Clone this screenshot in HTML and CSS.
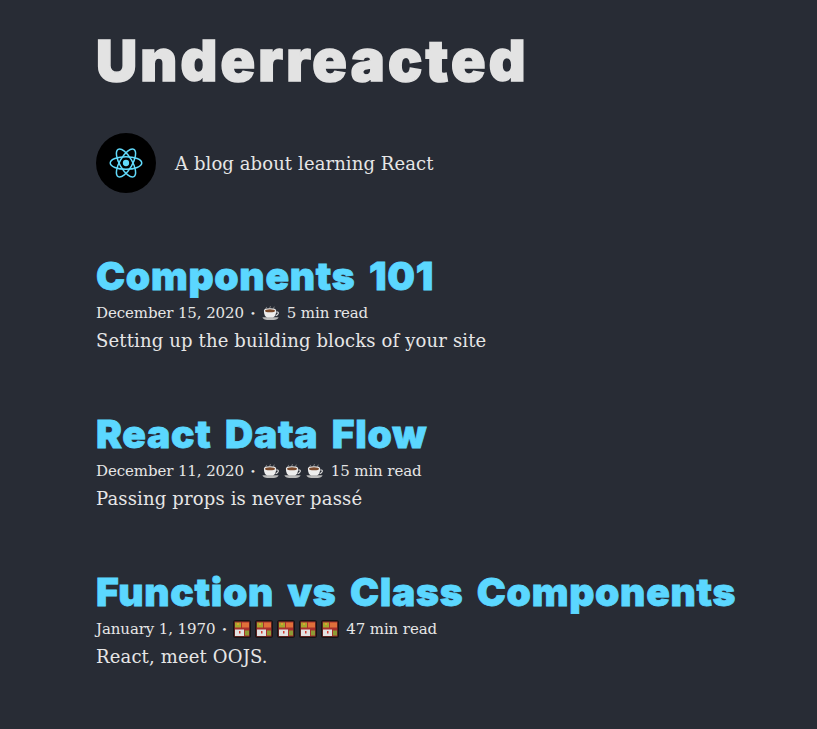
FILE: index.html
```html
<!DOCTYPE html>
<html lang="en">
<head>
    <meta charset="UTF-8">
    <meta name="viewport" content="width=device-width, initial-scale=1.0">
    <title>Underreacted</title>
    <link rel="stylesheet" href="styles.css">
</head>
<body>
    <svg class="defs" width="0" height="0">
        <symbol id="cup" viewBox="0 0 18 16">
            <path d="M4 3.500C4 2.500 5 2.600 5 1.600M8 3C8 2 9 1.800 9 .8M12 3.500c0-1 1-1.200 1-2.200" fill="none" stroke="#8a8a8a" stroke-width="1"/>
            <path d="M.5 12.400h17c-.5 2-3 3.100-8.500 3.100S1 14.400.5 12.400z" fill="#b9b9b9"/>
            <path d="M15 7h1.500c1.200 0 1.200 3.300-2 3.800" fill="none" stroke="#e0e0e0" stroke-width="1.200"/>
            <path d="M2 5.500c0-1.500 2.500-2.400 6.500-2.400S15 4 15 5.500c0 4-1.500 6.700-3.500 7.200h-6C3.500 12.200 2 9.500 2 5.500z" fill="#ededed"/>
            <ellipse cx="8.500" cy="5.600" rx="5.300" ry="1.700" fill="#7b4a2c"/>
        </symbol>
        <symbol id="bento" viewBox="0 0 18 18">
            <rect width="18" height="18" rx="2.500" fill="#141414"/>
            <rect x="1.500" y="1.500" width="15" height="15" fill="#a8302c"/>
            <rect x="2" y="2.500" width="6" height="5" fill="#a5a82e"/>
            <rect x="4" y="3" width="2" height="2" fill="#e0a030"/>
            <rect x="9" y="2.500" width="7" height="5" fill="#e0703a"/>
            <rect x="2" y="9.500" width="9" height="6.500" fill="#e2e2e2"/>
            <rect x="6" y="11" width="1.500" height="2.500" fill="#d23b30"/>
            <rect x="12" y="10.500" width="4" height="5" fill="#8f9a34"/>
        </symbol>
    </svg>

    <main class="page">
        <h1 class="site-title">Underreacted</h1>

        <div class="bio">
            <div class="avatar">
                <svg viewBox="-12 -12 24 24" width="36" height="36">
                    <circle r="2.100" fill="#61dafb"/>
                    <g fill="none" stroke="#61dafb" stroke-width="1">
                        <ellipse rx="10.500" ry="4.200"/>
                        <ellipse rx="10.500" ry="4.200" transform="rotate(60)"/>
                        <ellipse rx="10.500" ry="4.200" transform="rotate(120)"/>
                    </g>
                </svg>
            </div>
            <p class="tagline">A blog about learning React</p>
        </div>

        <article class="post">
            <h2 class="post-title">Components 101</h2>
            <div class="meta">
                <span>December 15, 2020</span><span class="dot">•</span>
                <span class="icons"><svg class="ico"><use href="#cup"/></svg></span>
                <span>5 min read</span>
            </div>
            <p class="desc">Setting up the building blocks of your site</p>
        </article>

        <article class="post">
            <h2 class="post-title">React Data Flow</h2>
            <div class="meta">
                <span>December 11, 2020</span><span class="dot">•</span>
                <span class="icons">
                    <svg class="ico"><use href="#cup"/></svg>
                    <svg class="ico"><use href="#cup"/></svg>
                    <svg class="ico"><use href="#cup"/></svg>
                </span>
                <span>15 min read</span>
            </div>
            <p class="desc">Passing props is never passé</p>
        </article>

        <article class="post">
            <h2 class="post-title">Function vs Class Components</h2>
            <div class="meta">
                <span>January 1, 1970</span><span class="dot">•</span>
                <span class="icons">
                    <svg class="ico bento"><use href="#bento"/></svg>
                    <svg class="ico bento"><use href="#bento"/></svg>
                    <svg class="ico bento"><use href="#bento"/></svg>
                    <svg class="ico bento"><use href="#bento"/></svg>
                    <svg class="ico bento"><use href="#bento"/></svg>
                </span>
                <span>47 min read</span>
            </div>
            <p class="desc">React, meet OOJS.</p>
        </article>
    </main>
</body>
</html>
```

FILE: styles.css
```css
* {
    margin: 0;
    padding: 0;
    box-sizing: border-box;
}

body {
    background-color: #282c35;
    color: #e6e6e6;
    font-family: "DejaVu Serif", serif;
}

.defs {
    display: block;
    height: 0;
}

.page {
    padding: 27px 0 0 96px;
}

.site-title {
    color: #e3e3e3;
    font-family: Inter, sans-serif;
    font-size: 57px;
    font-weight: 900;
    line-height: 68px;
    letter-spacing: 3.2px;
    -webkit-text-stroke: 1.5px #e3e3e3;
}

.bio {
    display: flex;
    align-items: center;
    gap: 19px;
    margin-top: 37px;
}

.avatar {
    display: flex;
    align-items: center;
    justify-content: center;
    width: 60px;
    height: 60px;
    border-radius: 50%;
    background-color: #000;
}

.tagline {
    padding-top: 2px;
    font-size: 18px;
    line-height: 60px;
    letter-spacing: 0.1px;
}

.post {
    height: 158px;
}

.bio + .post {
    margin-top: 57px;
}

.post-title {
    color: #5bd7ff;
    font-family: Inter, sans-serif;
    font-size: 39px;
    font-weight: 900;
    line-height: 49px;
    letter-spacing: 0.7px;
    word-spacing: 5px;
    -webkit-text-stroke: 0.8px #5bd7ff;
}

.meta {
    display: flex;
    align-items: center;
    height: 26px;
    font-size: 15px;
    letter-spacing: -0.1px;
}

.dot {
    margin: 0 4px 0 6px;
    font-size: 10px;
}

.icons {
    display: flex;
    gap: 5px;
    margin: 0 8px 0 2px;
}

.ico {
    display: block;
    width: 17px;
    height: 16px;
}

.bento {
    width: 18px;
    height: 18px;
    margin-right: -1px;
}

.desc {
    font-size: 18px;
    line-height: 30px;
    letter-spacing: 0.15px;
}
```
